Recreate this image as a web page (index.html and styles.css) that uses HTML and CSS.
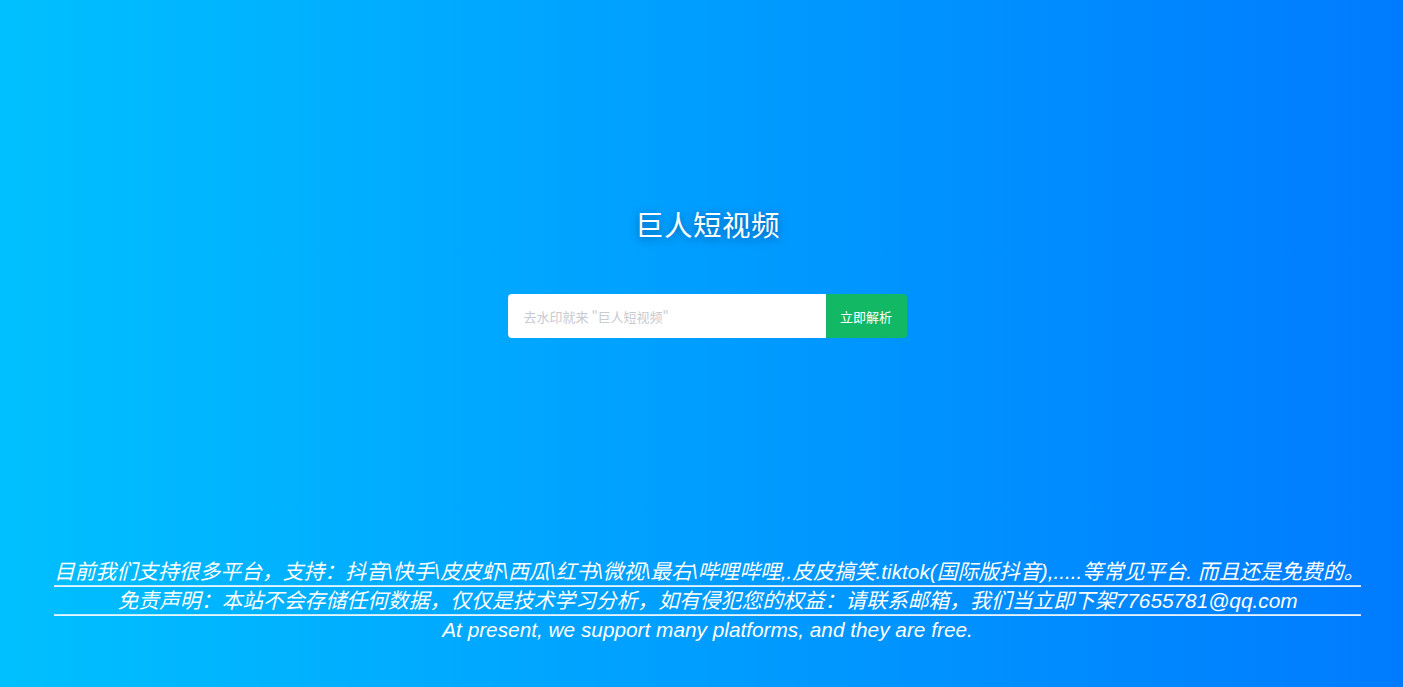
FILE: index.html
```html
<!DOCTYPE html>
<html lang="zh-CN">
<head>
<meta charset="utf-8">
<title>巨人短视频</title>
<link rel="stylesheet" href="styles.css">
</head>
<body>
<div class="page">
  <main class="hero">
    <h1 class="title">巨人短视频</h1>
    <form class="search">
      <input class="search-input" type="text" placeholder="去水印就来 &quot;巨人短视频&quot;">
      <button class="search-btn" type="button">立即解析</button>
    </form>
  </main>
  <footer class="footer">
    <div class="notes">
      <div class="note">目前我们支持很多平台，支持：抖音\快手\皮皮虾\西瓜\红书\微视\最右\哔哩哔哩,.皮皮搞笑.tiktok(国际版抖音),.....等常见平台. 而且还是免费的。</div>
      <div class="rule"></div>
      <div class="note">免责声明：本站不会存储任何数据，仅仅是技术学习分析，如有侵犯您的权益：请联系邮箱，我们当立即下架77655781@qq.com</div>
      <div class="rule"></div>
      <div class="note">At present, we support many platforms, and they are free.</div>
    </div>
  </footer>
</div>
</body>
</html>
```
FILE: styles.css
```css
html, body {
  margin: 0;
  padding: 0;
  height: 100%;
}
body {
  background: linear-gradient(to right, #00c0ff, #007bff);
  font-family: "Liberation Sans", "Noto Sans CJK SC", sans-serif;
  color: #fff;
  overflow: hidden;
}
.page {
  height: 687px;
  display: flex;
  flex-direction: column;
}
.hero {
  display: flex;
  flex-direction: column;
  align-items: center;
  padding-top: 203px;
}
.title {
  margin: 0 0 0 12px;
  font-family: "Noto Sans CJK SC", sans-serif;
  font-weight: 400;
  font-size: 28.5px;
  line-height: 42px;
  letter-spacing: 0.5px;
  text-shadow: 0 2px 8px rgba(0, 40, 90, 0.55);
}
.search {
  display: flex;
  margin: 49px 0 0 11px;
}
.search-input {
  box-sizing: border-box;
  width: 318px;
  height: 44px;
  border: none;
  border-radius: 4px 0 0 4px;
  padding: 0 16px;
  font-family: "Noto Sans CJK SC", sans-serif;
  font-size: 13px;
  color: #333;
  background: #fff;
  outline: none;
}
.search-input::placeholder {
  color: #c6cad2;
}
.search-btn {
  box-sizing: border-box;
  width: 81px;
  height: 44px;
  border: none;
  border-radius: 0 4px 4px 0;
  background: #13b865;
  color: #fff;
  font-family: "Noto Sans CJK SC", sans-serif;
  font-size: 13px;
  padding: 0;
}
.footer {
  margin-top: auto;
  padding: 0 0 44px 12px;
  text-align: center;
}
.notes {
  display: inline-block;
  width: 1307px;
  font-style: italic;
  font-size: 20.8px;
}
.note {
  line-height: 27px;
  white-space: nowrap;
}
.rule {
  height: 0;
  border-top: 1px solid rgba(255, 255, 255, 0.75);
  border-bottom: 1px solid rgba(255, 255, 255, 0.9);
}
```
